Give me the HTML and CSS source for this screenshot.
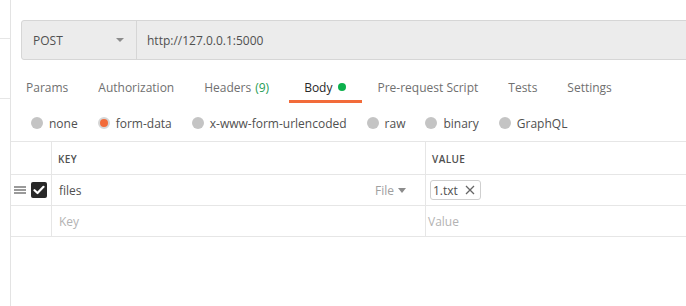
FILE: index.html
```html
<!DOCTYPE html>
<html lang="en">
<head>
    <meta charset="UTF-8">
    <meta name="viewport" content="width=device-width, initial-scale=1.0">
    <title>Request Body</title>
    <link rel="stylesheet" href="styles.css">
</head>
<body>
    <div class="page">
        <div class="sidebar">
            <div class="sidebar-item first"></div>
            <div class="sidebar-item second"></div>
        </div>
        <div class="main">
            <div class="url-bar">
                <div class="method">
                    <span>POST</span>
                    <span class="caret"></span>
                </div>
                <div class="url">http://127.0.0.1:5000</div>
            </div>

            <div class="tabs">
                <div class="tab">Params</div>
                <div class="tab">Authorization</div>
                <div class="tab headers">Headers <span class="count">(9)</span></div>
                <div class="tab active">Body <span class="dot"></span></div>
                <div class="tab">Pre-request Script</div>
                <div class="tab">Tests</div>
                <div class="tab">Settings</div>
            </div>

            <div class="body-types">
                <label class="radio"><span class="circle"></span>none</label>
                <label class="radio selected"><span class="circle"></span>form-data</label>
                <label class="radio"><span class="circle"></span>x-www-form-urlencoded</label>
                <label class="radio"><span class="circle"></span>raw</label>
                <label class="radio"><span class="circle"></span>binary</label>
                <label class="radio"><span class="circle"></span>GraphQL</label>
            </div>

            <table class="params">
                <thead>
                    <tr>
                        <th class="col-check"></th>
                        <th class="col-key">KEY</th>
                        <th>VALUE</th>
                    </tr>
                </thead>
                <tbody>
                    <tr>
                        <td class="col-check">
                            <div class="row-tools">
                                <span class="handle"><i></i><i></i><i></i></span>
                                <span class="checkbox">
                                    <svg width="12" height="10" viewBox="0 0 12 10"><path d="M1.5 5.2 L4.5 8 L10.5 1.8" fill="none" stroke="#fff" stroke-width="2.2" stroke-linecap="round" stroke-linejoin="round"/></svg>
                                </span>
                            </div>
                        </td>
                        <td class="col-key">
                            <div class="key-cell">
                                <span>files</span>
                                <span class="type">File <span class="type-caret"></span></span>
                            </div>
                        </td>
                        <td>
                            <span class="chip">1.txt
                                <svg width="10" height="10" viewBox="0 0 10 10"><path d="M1 1 L9 9 M9 1 L1 9" stroke="#666" stroke-width="1.3"/></svg>
                            </span>
                        </td>
                    </tr>
                    <tr>
                        <td class="col-check"></td>
                        <td class="col-key placeholder">Key</td>
                        <td class="placeholder value-ph">Value</td>
                    </tr>
                </tbody>
            </table>
        </div>
    </div>
</body>
</html>
```

FILE: styles.css
```css
body {
    margin: 0;
    font-family: "Open Sans", "Liberation Sans", sans-serif;
    font-size: 12px;
    color: #505050;
    background: #fff;
}
.page {
    display: flex;
    height: 306px;
    overflow: hidden;
}
.sidebar {
    width: 10px;
    flex-shrink: 0;
    border-right: 1px solid #e3e3e3;
}
.sidebar-item {
    border-bottom: 1px solid #e6e6e6;
}
.sidebar-item.first {
    height: 38px;
}
.sidebar-item.second {
    height: 59px;
}
.main {
    flex: 1;
    min-width: 0;
    padding-top: 20px;
    overflow: hidden;
}
.url-bar {
    display: flex;
    height: 38px;
    margin-left: 10px;
    margin-right: -10px;
    background: #ececec;
    border: 1px solid #d6d6d6;
    border-radius: 3px;
}
.method {
    width: 92px;
    padding: 0 11px;
    display: flex;
    align-items: center;
    justify-content: space-between;
    border-right: 1px solid #d6d6d6;
}
.caret {
    width: 0;
    height: 0;
    border-left: 4px solid transparent;
    border-right: 4px solid transparent;
    border-top: 4px solid #8c8c8c;
    margin-right: 1px;
}
.url {
    display: flex;
    align-items: center;
    padding-left: 10px;
}
.tabs {
    display: flex;
    margin-top: 18px;
}
.tab {
    display: flex;
    align-items: center;
    gap: 4px;
    height: 18px;
    padding: 0 15px 4px;
    border-bottom: 3px solid transparent;
    color: #707070;
    white-space: nowrap;
}
.tab.headers {
    padding-right: 20px;
}
.count {
    color: #1f9d55;
}
.tab.active {
    gap: 6px;
    padding-right: 16px;
    color: #282828;
    border-bottom-color: #f26b3a;
}
.tab.active .dot {
    width: 8px;
    height: 8px;
    border-radius: 50%;
    background: #0cb04c;
}
.body-types {
    display: flex;
    gap: 20px;
    height: 20px;
    margin-top: 10px;
    padding-left: 20px;
}
.radio {
    display: flex;
    align-items: center;
    gap: 6px;
    color: #505050;
    white-space: nowrap;
}
.circle {
    width: 12px;
    height: 12px;
    border-radius: 50%;
    background: #c4c4c4;
    box-sizing: border-box;
}
.radio.selected .circle {
    background: #f26b3a;
    border: 2px solid #d6d6d6;
}
.params {
    margin-top: 8px;
    width: calc(100% + 20px);
    border-collapse: collapse;
    table-layout: fixed;
}
.params th,
.params td {
    height: 30px;
    padding: 0 6px 0 7px;
    border: 1px solid #e6e6e6;
    text-align: left;
    white-space: nowrap;
}
.params tr > :first-child {
    border-left: none;
}
.params th {
    font-size: 10px;
    font-weight: 600;
    letter-spacing: 0.4px;
    color: #505050;
    padding-top: 2px;
    padding-left: 6px;
}
.params .col-check {
    width: 40px;
    padding: 0;
}
.params .col-key {
    width: 361px;
}
.row-tools {
    display: flex;
    align-items: center;
    gap: 5px;
    padding-left: 3px;
}
.handle {
    display: flex;
    flex-direction: column;
    gap: 1px;
    width: 12px;
}
.handle i {
    height: 2px;
    background: #9a9a9a;
}
.checkbox {
    width: 16px;
    height: 16px;
    border-radius: 2px;
    background: #282828;
    display: flex;
    align-items: center;
    justify-content: center;
}
.key-cell {
    display: flex;
    justify-content: space-between;
    align-items: center;
    padding-right: 13px;
}
.type {
    color: #a0a0a0;
    display: flex;
    align-items: center;
    gap: 4px;
}
.type-caret {
    width: 0;
    height: 0;
    border-left: 4px solid transparent;
    border-right: 4px solid transparent;
    border-top: 5px solid #8c8c8c;
}
.chip {
    display: inline-flex;
    align-items: center;
    gap: 7px;
    height: 18px;
    padding: 0 5px 0 2px;
    border: 1px solid #cfcfcf;
    border-radius: 3px;
    color: #505050;
    margin-left: -3px;
}
.placeholder {
    color: #b3b3b3;
}
.value-ph {
    padding-left: 2px !important;
}
```
